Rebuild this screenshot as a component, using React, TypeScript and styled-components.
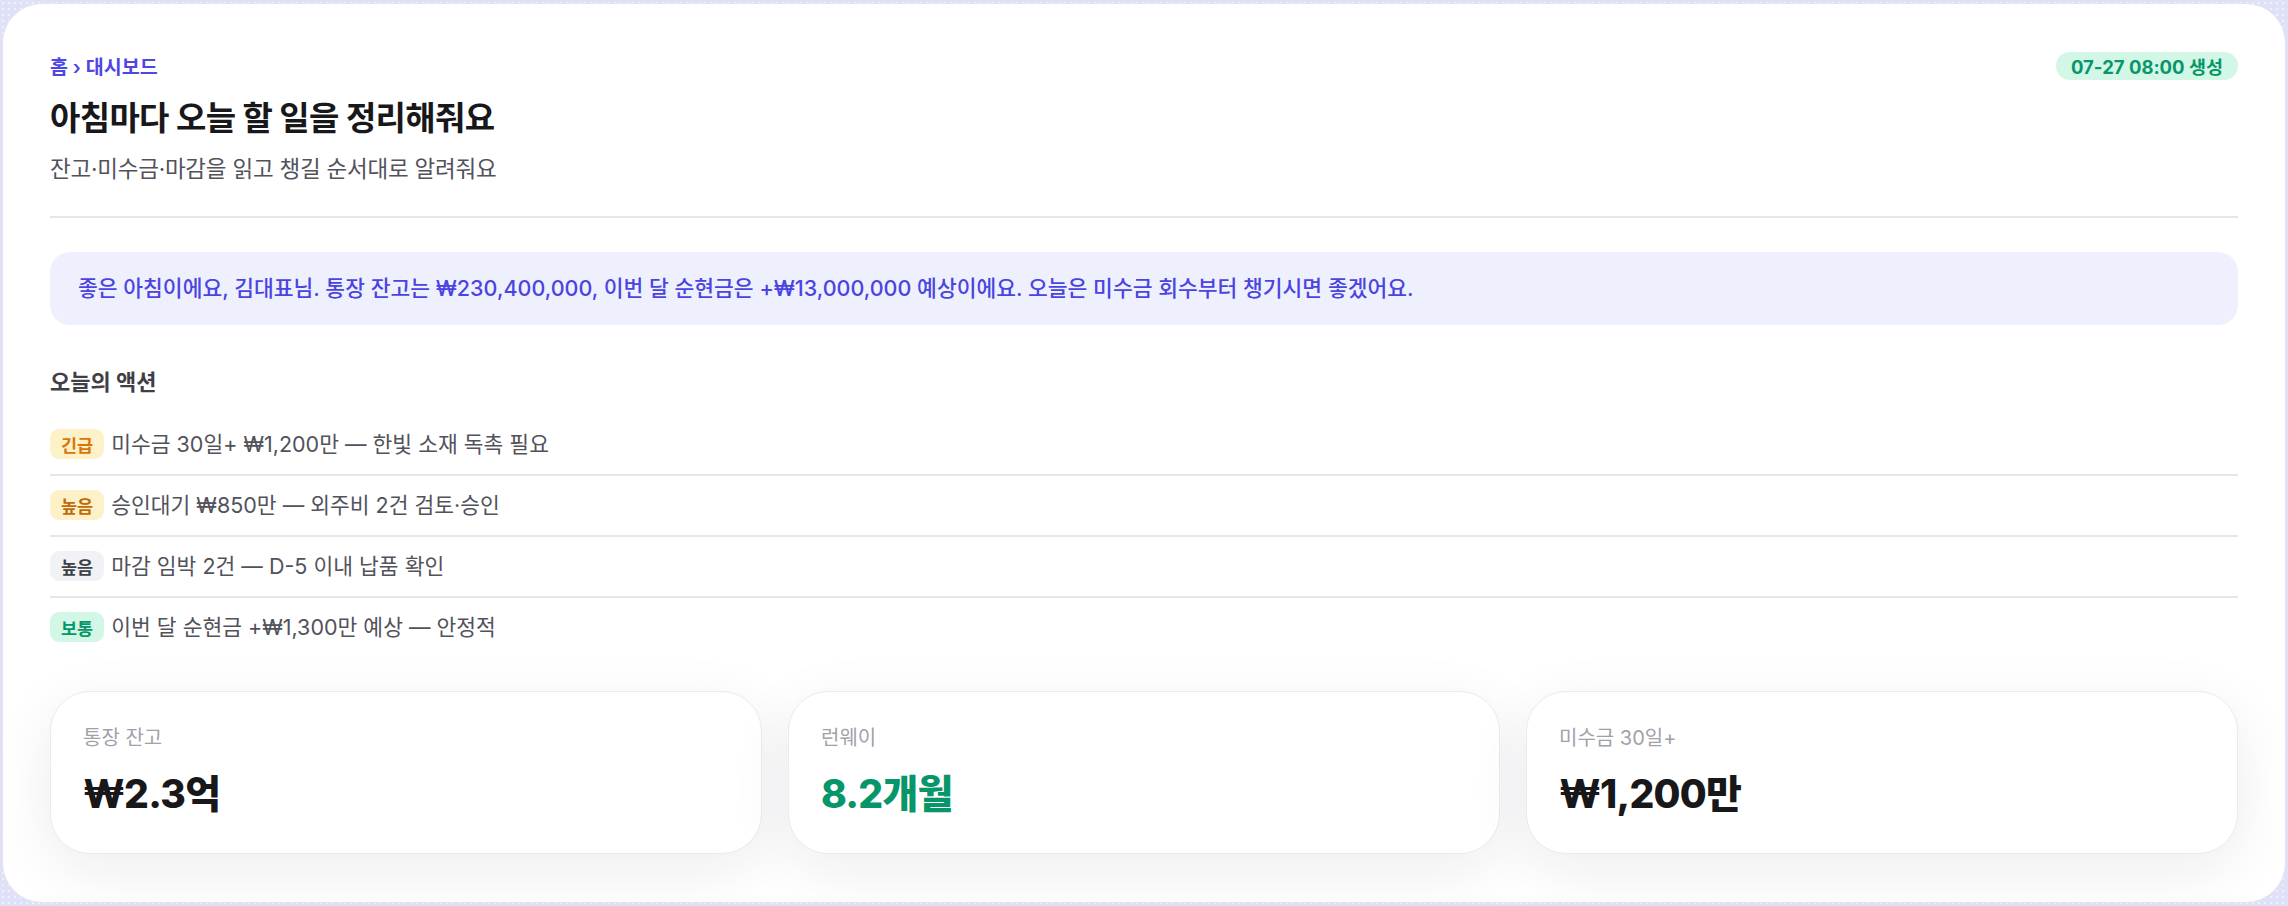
import React from 'react'
import styled, { createGlobalStyle } from 'styled-components'

const GlobalStyle = createGlobalStyle`
  * {
    box-sizing: border-box;
  }
  html, body {
    margin: 0;
    padding: 0;
  }
  body {
    font-family: Inter, 'Noto Sans CJK KR', sans-serif;
    background-color: #dfe1f8;
    background-image: radial-gradient(rgba(255, 255, 255, 0.55) 1px, transparent 1.2px);
    background-size: 6px 6px;
    color: #18181b;
  }
`

type Tone = 'urgent' | 'high' | 'muted' | 'normal'

const toneColors: Record<Tone, { bg: string; fg: string }> = {
  urgent: { bg: '#fdf1c8', fg: '#d97706' },
  high: { bg: '#fdf1c8', fg: '#c2690a' },
  muted: { bg: '#f1f2f6', fg: '#3f3f46' },
  normal: { bg: '#d3f7e6', fg: '#059669' },
}

const actions: { tone: Tone; label: string; text: string }[] = [
  { tone: 'urgent', label: '긴급', text: '미수금 30일+ ₩1,200만 — 한빛 소재 독촉 필요' },
  { tone: 'high', label: '높음', text: '승인대기 ₩850만 — 외주비 2건 검토·승인' },
  { tone: 'muted', label: '높음', text: '마감 임박 2건 — D-5 이내 납품 확인' },
  { tone: 'normal', label: '보통', text: '이번 달 순현금 +₩1,300만 예상 — 안정적' },
]

const stats = [
  { label: '통장 잔고', value: '₩2.3억', positive: false },
  { label: '런웨이', value: '8.2개월', positive: true },
  { label: '미수금 30일+', value: '₩1,200만', positive: false },
]

const App = () => {
  return (
    <>
      <GlobalStyle />
      <Page>
        <Panel>
          <Header>
            <HeaderText>
              <Breadcrumb>홈 › 대시보드</Breadcrumb>
              <Title>아침마다 오늘 할 일을 정리해줘요</Title>
              <Subtitle>잔고·미수금·마감을 읽고 챙길 순서대로 알려줘요</Subtitle>
            </HeaderText>
            <GeneratedBadge>07-27 08:00 생성</GeneratedBadge>
          </Header>

          <Briefing>
            좋은 아침이에요, 김대표님. 통장 잔고는 ₩230,400,000, 이번 달 순현금은 +₩13,000,000
            예상이에요. 오늘은 미수금 회수부터 챙기시면 좋겠어요.
          </Briefing>

          <SectionLabel>오늘의 액션</SectionLabel>
          <ActionList>
            {actions.map((a, i) => (
              <ActionRow key={i}>
                <Priority $tone={a.tone}>{a.label}</Priority>
                <ActionText>{a.text}</ActionText>
              </ActionRow>
            ))}
          </ActionList>

          <StatGrid>
            {stats.map((s) => (
              <StatCard key={s.label}>
                <StatLabel>{s.label}</StatLabel>
                <StatValue $positive={s.positive}>{s.value}</StatValue>
              </StatCard>
            ))}
          </StatGrid>
        </Panel>
      </Page>
    </>
  )
}

const Page = styled.div`
  padding: 3px 2px;
  min-height: 906px;
`

const Panel = styled.main`
  height: 900px;
  background: #ffffff;
  border: 1px solid #e4e4ec;
  border-radius: 40px;
  padding: 50px 47px;
`

const Header = styled.header`
  display: flex;
  justify-content: space-between;
  align-items: flex-start;
  padding-bottom: 33px;
  border-bottom: 2px solid #e5e7ef;
`

const HeaderText = styled.div`
  display: flex;
  flex-direction: column;
`

const Breadcrumb = styled.div`
  font-size: 19.5px;
  line-height: 26px;
  font-weight: 600;
  color: #4f46e5;
`

const Title = styled.h1`
  margin: 19px 0 0;
  font-size: 33px;
  line-height: 38px;
  font-weight: 700;
  letter-spacing: -0.02em;
  color: #18181b;
`

const Subtitle = styled.p`
  margin: 18px 0 0;
  font-size: 22.5px;
  line-height: 28px;
  letter-spacing: -0.01em;
  color: #52525b;
`

const GeneratedBadge = styled.span`
  display: inline-flex;
  align-items: center;
  height: 28px;
  margin-top: -2px;
  padding: 0 15px;
  border-radius: 14px;
  background: #d3f7e6;
  color: #059669;
  font-size: 18.5px;
  font-weight: 700;
`

const Briefing = styled.div`
  margin-top: 34px;
  padding: 22px 28px;
  border-radius: 20px;
  background: #eef1fd;
  color: #4b44e0;
  font-size: 21.5px;
  line-height: 29px;
  font-weight: 500;
`

const SectionLabel = styled.h2`
  margin: 43px 0 0;
  font-size: 22px;
  line-height: 28px;
  font-weight: 700;
  color: #3f3f46;
`

const ActionList = styled.ul`
  list-style: none;
  margin: 19px 0 0;
  padding: 0;
`

const ActionRow = styled.li`
  display: flex;
  align-items: center;
  gap: 7px;
  padding: 14px 0 15px;
  border-bottom: 2px solid #e5e7ef;

  &:last-child {
    border-bottom: none;
  }
`

const Priority = styled.span<{ $tone: Tone }>`
  display: inline-flex;
  align-items: center;
  justify-content: center;
  height: 30px;
  padding: 0 11px;
  border-radius: 9px;
  font-size: 17.5px;
  font-weight: 700;
  background: ${(p) => toneColors[p.$tone].bg};
  color: ${(p) => toneColors[p.$tone].fg};
`

const ActionText = styled.span`
  font-size: 21.5px;
  line-height: 30px;
  color: #52525b;
`

const StatGrid = styled.div`
  display: grid;
  grid-template-columns: repeat(3, 1fr);
  gap: 26px;
  margin-top: 34px;
`

const StatCard = styled.div`
  display: flex;
  flex-direction: column;
  gap: 20px;
  height: 163px;
  padding: 33px 32px;
  background: #ffffff;
  border: 1.5px solid #ebebef;
  border-radius: 40px;
  box-shadow: 0 16px 60px rgba(30, 30, 50, 0.08);
`

const StatLabel = styled.div`
  font-size: 20px;
  line-height: 26px;
  color: #a1a1aa;
`

const StatValue = styled.div<{ $positive: boolean }>`
  font-size: 39px;
  line-height: 46px;
  font-weight: 800;
  letter-spacing: -0.02em;
  color: ${(p) => (p.$positive ? '#079669' : '#18181b')};
`

export default App
